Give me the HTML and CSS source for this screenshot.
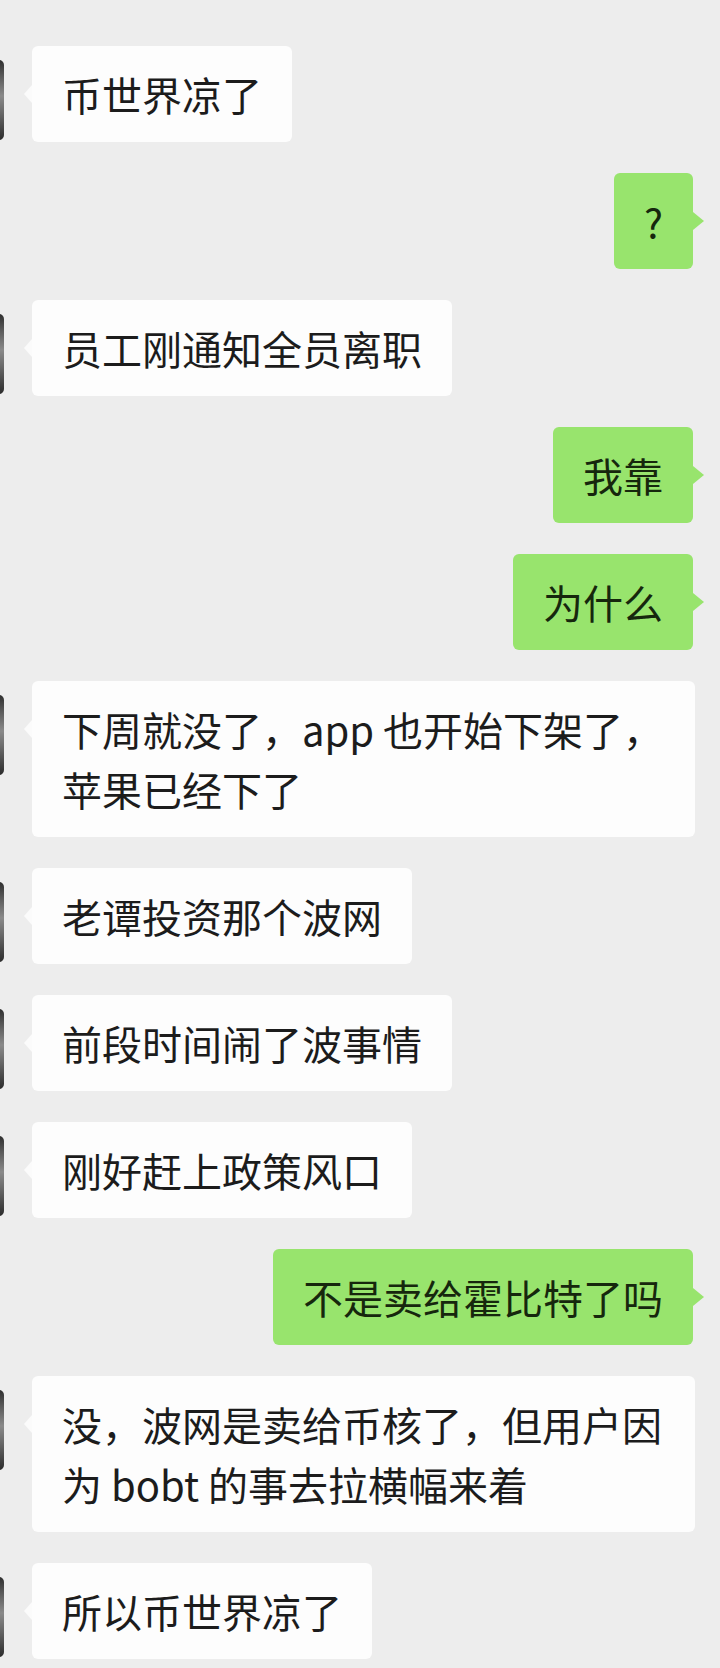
FILE: index.html
```html
<!DOCTYPE html>
<html lang="zh-CN">
<head>
<meta charset="utf-8">
<title>聊天</title>
<link rel="stylesheet" href="styles.css">
</head>
<body>
<main class="chat">
  <div class="row in"><div class="avatar"></div><div class="bubble">币世界凉了</div></div>
  <div class="row out"><div class="bubble">?</div></div>
  <div class="row in"><div class="avatar"></div><div class="bubble">员工刚通知全员离职</div></div>
  <div class="row out"><div class="bubble">我靠</div></div>
  <div class="row out"><div class="bubble">为什么</div></div>
  <div class="row in"><div class="avatar"></div><div class="bubble">下周就没了，app 也开始下架了，苹果已经下了</div></div>
  <div class="row in"><div class="avatar"></div><div class="bubble">老谭投资那个波网</div></div>
  <div class="row in"><div class="avatar"></div><div class="bubble">前段时间闹了波事情</div></div>
  <div class="row in"><div class="avatar"></div><div class="bubble">刚好赶上政策风口</div></div>
  <div class="row out"><div class="bubble">不是卖给霍比特了吗</div></div>
  <div class="row in"><div class="avatar"></div><div class="bubble">没，波网是卖给币核了，但用户因为 bobt 的事去拉横幅来着</div></div>
  <div class="row in"><div class="avatar"></div><div class="bubble">所以币世界凉了</div></div>
</main>
</body>
</html>
```

FILE: styles.css
```css
html, body {
  margin: 0;
  padding: 0;
  background: #ededed;
}

.chat {
  width: 720px;
  height: 1668px;
  overflow: hidden;
  box-sizing: border-box;
  padding-top: 46px;
  display: flex;
  flex-direction: column;
  gap: 31px;
  font-family: "Noto Sans CJK SC", "Noto Sans", sans-serif;
  font-size: 40px;
  line-height: 60px;
  color: #1c1c1c;
}

.row {
  display: flex;
  align-items: flex-start;
}

.row.in {
  justify-content: flex-start;
}

.row.out {
  justify-content: flex-end;
  padding-right: 27px;
}

.avatar {
  flex: none;
  width: 84px;
  height: 80px;
  margin-left: -80px;
  margin-top: 14px;
  margin-right: 28px;
  border-radius: 5px;
  background: linear-gradient(#2f2f2f 0%, #5a5a5a 20%, #8a8a8a 45%, #6a6a6a 65%, #2c2c2c 100%);
}

.bubble {
  position: relative;
  max-width: 603px;
  padding: 18px 30px;
  border-radius: 6px;
  background: #fdfdfd;
}

.row.in .bubble::before {
  content: "";
  position: absolute;
  left: -8px;
  top: 39px;
  border-style: solid;
  border-width: 9px 8px 9px 0;
  border-color: transparent #fbfbfb transparent transparent;
}

.row.out .bubble {
  background: #98e46d;
  color: #16270d;
}

.row.out .bubble::after {
  content: "";
  position: absolute;
  right: -11px;
  top: 39px;
  border-style: solid;
  border-width: 9px 0 9px 11px;
  border-color: transparent transparent transparent #98e46d;
}
```
